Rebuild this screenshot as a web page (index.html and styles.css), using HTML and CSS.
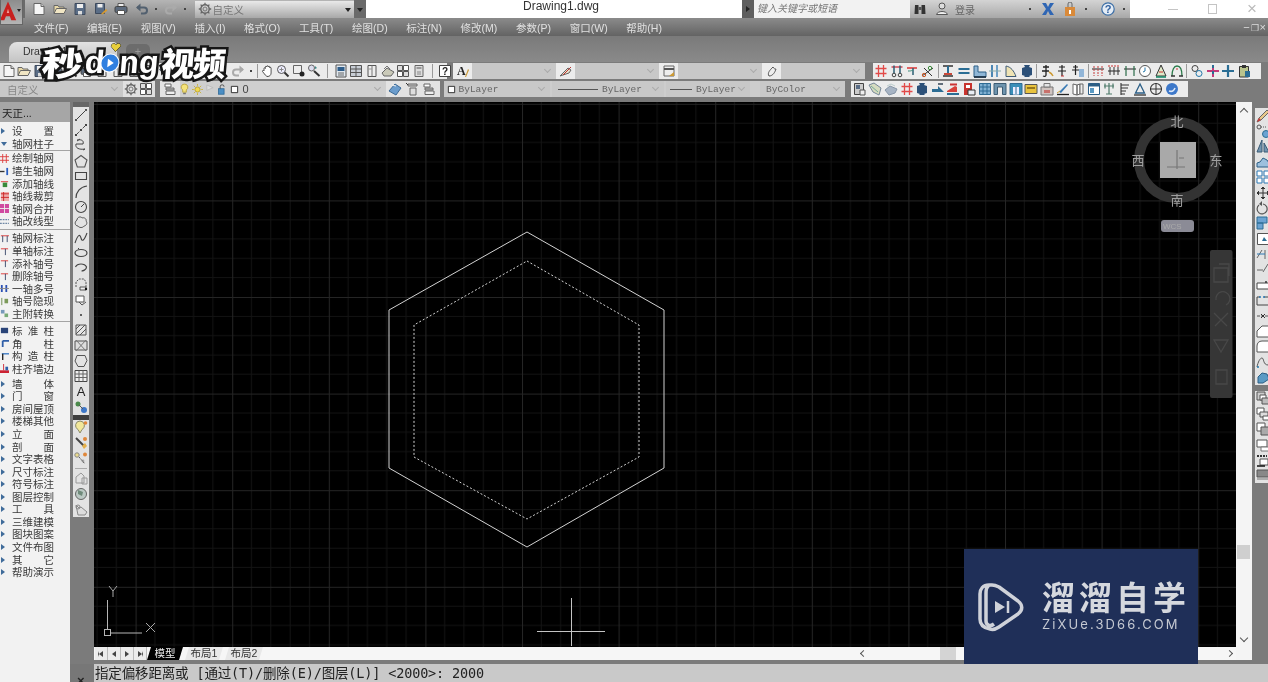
FILE: index.html
```html
<!DOCTYPE html>
<html lang="zh">
<head>
<meta charset="utf-8">
<title>Drawing1.dwg</title>
<link rel="stylesheet" href="styles.css">
</head>
<body>
<svg class="sprite" xmlns="http://www.w3.org/2000/svg">
<defs>
<symbol id="new" viewBox="0 0 14 14"><path d="M2 1.500h7l3 3v8H2z" fill="#f6f6f6" stroke="#666"/><path d="M9 1.500v3h3" fill="#ccc" stroke="#666"/></symbol>
<symbol id="open" viewBox="0 0 14 14"><path d="M1 11.500v-8h4l1 1.500h5v1.500" fill="#e8d9a8" stroke="#666"/><path d="M1 11.500l2.500-5h10l-2.500 5z" fill="#f1e6c4" stroke="#666"/></symbol>
<symbol id="save" viewBox="0 0 14 14"><path d="M2 1.500h10v11H2z" fill="#5a6d86" stroke="#3e4a5c"/><path d="M4 2h6v4H4z" fill="#eee"/><path d="M5 9h4v3.500H5z" fill="#ddd"/></symbol>
<symbol id="saveas" viewBox="0 0 14 14"><path d="M1.500 1.500h9v10h-9z" fill="#5a6d86" stroke="#3e4a5c"/><path d="M3.500 2h5v3.500h-5z" fill="#eee"/><path d="M7 12l5-5 1.500 1.500-5 4z" fill="#d89a2e"/></symbol>
<symbol id="print" viewBox="0 0 14 14"><path d="M4 1.500h6v3H4z" fill="#eee" stroke="#555"/><rect x="1" y="4.500" width="12" height="6" rx="1.500" fill="#5d6b7d" stroke="#444"/><path d="M3.500 8.500h7v4h-7z" fill="#fff" stroke="#555"/></symbol>
<symbol id="undo" viewBox="0 0 14 14"><path d="M2 5.500h7a3 3 0 0 1 0 6H6" fill="none" stroke="#52606f" stroke-width="2"/><path d="M5.500 1.500v8L1 5.500z" fill="#52606f"/></symbol>
<symbol id="redo" viewBox="0 0 14 14"><path d="M12 5.500H5a3 3 0 0 0 0 6h3" fill="none" stroke="#aaa" stroke-width="2"/><path d="M8.500 1.500v8l4.500-4z" fill="#aaa"/></symbol>
<symbol id="gear" viewBox="0 0 14 14"><circle cx="7" cy="7" r="4.200" fill="none" stroke="#666" stroke-width="1.400"/><circle cx="7" cy="7" r="2" fill="none" stroke="#777"/><path d="M7 .8v2M7 11.200v2M.8 7h2M11.200 7h2M2.600 2.600l1.400 1.400M10 10l1.400 1.400M2.600 11.400L4 10M10 4l1.400-1.400" stroke="#666" stroke-width="1.300"/></symbol>
<symbol id="hand" viewBox="0 0 14 14"><path d="M3 7V4.500c0-1 1.300-1 1.300 0V3c0-1 1.500-1 1.500 0v-.500c0-1 1.500-1 1.500 0V3c0-1 1.500-1 1.500 0v1c0-.8 1.300-.8 1.300 0v5c0 2-1.500 3.500-3.500 3.500H7c-1.500 0-2.500-1-3.500-2.500L1.500 7.500c-.5-1 .8-1.500 1.500-.5z" fill="#fff" stroke="#444" stroke-width=".9"/></symbol>
<symbol id="zoom" viewBox="0 0 14 14"><circle cx="5.500" cy="5.500" r="4" fill="#eef" stroke="#555"/><path d="M8.500 8.500l4 4" stroke="#333" stroke-width="2"/><path d="M3.500 5.500h4M5.500 3.500v4" stroke="#888"/></symbol>
<symbol id="zoomw" viewBox="0 0 14 14"><path d="M1.500 1.500h8v8h-8z" fill="#eee" stroke="#666"/><circle cx="10" cy="10" r="2.500" fill="#222"/></symbol>
<symbol id="zoomp" viewBox="0 0 14 14"><circle cx="4.500" cy="4" r="3" fill="#dde" stroke="#666"/><path d="M7 7l5.500 5" stroke="#333" stroke-width="2"/><path d="M8 2l2 2-2 1z" fill="#3a8a8a"/></symbol>
<symbol id="sheet" viewBox="0 0 14 14"><path d="M2 1h10v12H2z" fill="#dfe7ee" stroke="#555"/><path d="M3.500 3h7v4h-7z" fill="#2e5d8a"/><path d="M4 9h6M4 11h6" stroke="#666"/></symbol>
<symbol id="table2" viewBox="0 0 14 14"><path d="M1.500 1.500h11v11h-11z" fill="#c8ced6" stroke="#555"/><path d="M7 1.500v11M1.500 5h11M1.500 8.500h11" stroke="#555"/></symbol>
<symbol id="doc" viewBox="0 0 14 14"><path d="M3 1.500h8v11H3z" fill="#eee" stroke="#555"/><path d="M7 1.500v11" stroke="#777"/><path d="M3 5h4" stroke="#999"/></symbol>
<symbol id="stack" viewBox="0 0 14 14"><path d="M1 9l5-5 7 4-3 4H3z" fill="#c9c9b8" stroke="#666"/><path d="M3 5l3-3 3 3" fill="none" stroke="#777"/></symbol>
<symbol id="grid4" viewBox="0 0 14 14"><path d="M1.500 1.500h5v5h-5zM7.500 7.500h5v5h-5z" fill="#ddd" stroke="#555"/><path d="M7.500 1.500h5v5h-5zM1.500 7.500h5v5h-5z" fill="#fff" stroke="#555"/></symbol>
<symbol id="calc" viewBox="0 0 14 14"><path d="M3 1.500h8v11H3z" fill="#ddd" stroke="#666"/><path d="M4.500 3h5v2h-5z" fill="#999"/><path d="M5 8h4M5 10h4" stroke="#888"/></symbol>
<symbol id="help" viewBox="0 0 14 14"><path d="M1.500 1.500h11v11h-11z" fill="#fff" stroke="#444"/><text x="7" y="11" class="g-help">?</text></symbol>
<symbol id="style-a" viewBox="0 0 14 14"><text x="1" y="11" class="g-a">A</text><path d="M9 13l3-8 1 1-3 7z" fill="#c93"/></symbol>
<symbol id="dim" viewBox="0 0 14 14"><path d="M1 12L9 4l3 2-2 3z" fill="#eadfc8" stroke="#666"/><path d="M4 11l8-8" stroke="#b33"/></symbol>
<symbol id="tstyle" viewBox="0 0 14 14"><path d="M2 2h10v10H2z" fill="#eee" stroke="#666"/><path d="M2 5h10" stroke="#555" stroke-width="2"/><path d="M7 12l5-4v4z" fill="#c93"/></symbol>
<symbol id="mstyle" viewBox="0 0 14 14"><path d="M4 12c-2-3 1-6 4-9 1 2 2 2 3 2-1 3-3 7-7 7z" fill="#eee" stroke="#555"/></symbol>
<symbol id="layer" viewBox="0 0 14 14"><path d="M2 2h6v3H2z" fill="#fff" stroke="#666"/><path d="M3 6h8v2H3z" fill="#bbb" stroke="#666"/><path d="M3 9h9v3.500H3z" fill="#eee" stroke="#666"/></symbol>
<symbol id="bulb" viewBox="0 0 10 14"><path d="M5 1a3.500 3.500 0 0 1 2 6.500V10H3V7.500A3.500 3.500 0 0 1 5 1z" fill="#f4e27a" stroke="#b9a23a"/><path d="M3.500 11.500h3" stroke="#777" stroke-width="1.500"/></symbol>
<symbol id="sun" viewBox="0 0 12 14"><circle cx="6" cy="7" r="2.800" fill="#f1d94e" stroke="#b9a23a"/><path d="M6 1v2M6 11v2M0 7h2M10 7h2M2 3l1.400 1.400M8.600 9.600L10 11M2 11l1.400-1.400M8.600 4.400L10 3" stroke="#c8b13c"/></symbol>
<symbol id="flag" viewBox="0 0 10 14"><path d="M2 2l7 3-7 3z" fill="#ddd" stroke="#bbb"/></symbol>
<symbol id="lock" viewBox="0 0 14 14"><rect x="2" y="6" width="7" height="7" fill="#4b8ec4" stroke="#2c6796"/><path d="M4 6V3.500a2.500 2.500 0 0 1 5 0" fill="none" stroke="#3a3a3a"/></symbol>
<symbol id="lsq" viewBox="0 0 10 14"><path d="M1.500 3.500h7v7h-7z" fill="#fff" stroke="#222"/></symbol>
<symbol id="lyr2" viewBox="0 0 14 14"><path d="M1 9l6-7 6 4-5 7z" fill="#6b9ccc" stroke="#3b6a96"/><path d="M4 3l4 1" stroke="#eee"/></symbol>
<symbol id="lyr3" viewBox="0 0 14 14"><path d="M3 2h9v2H3z" fill="#ccc" stroke="#666"/><path d="M5 6h6v7H5z" fill="#ddd" stroke="#666"/><path d="M1 1l2 2" stroke="#333"/></symbol>
<symbol id="hash" viewBox="0 0 14 14"><path d="M4.500 1v12M9.500 1v12M1.500 4.500h11M1.500 9.500h11" stroke="#e24a48" stroke-width="1.300" fill="none"/></symbol>
<symbol id="posts" viewBox="0 0 14 14"><path d="M1.500 3h11" stroke="#c23" stroke-width="1.200"/><path d="M4 1.500v8M10 1.500v8" stroke="#2c5f74" stroke-width="1.500"/><circle cx="4" cy="11" r="1.800" fill="none" stroke="#444"/><circle cx="10" cy="11" r="1.800" fill="none" stroke="#444"/></symbol>
<symbol id="tee" viewBox="0 0 14 14"><path d="M2 4h10" stroke="#d33" stroke-width="1.500"/><path d="M8 4v7" stroke="#2c5f74" stroke-width="1.500"/><path d="M3 7c2 0 3 0 5-1" stroke="#3a8a7a" fill="none"/></symbol>
<symbol id="scis" viewBox="0 0 14 14"><path d="M1 12l11-8M3 4l8 8" stroke="#333"/><circle cx="3" cy="11" r="1.700" fill="none" stroke="#c52"/><circle cx="9" cy="4" r="1.700" fill="none" stroke="#3a8a3a"/></symbol>
<symbol id="ibar" viewBox="0 0 14 14"><path d="M2 2h10M2 12h10" stroke="#333" stroke-width="1.300"/><path d="M7 2v7" stroke="#2a6d94" stroke-width="2"/><path d="M3 9h8v2H3z" fill="#c8493a"/></symbol>
<symbol id="eq" viewBox="0 0 14 14"><path d="M1.500 5h11M1.500 9h11" stroke="#2a6d94" stroke-width="2"/></symbol>
<symbol id="steps" viewBox="0 0 14 14"><path d="M1 13V2h4v6h8v5z" fill="#8fb6d6" stroke="#2c5f86"/><path d="M1 13h12" stroke="#123" stroke-width="1.500"/></symbol>
<symbol id="bars" viewBox="0 0 14 14"><path d="M4 1v12" stroke="#4b86b4" stroke-width="2"/><path d="M9 1v12" stroke="#6ea0c7" stroke-width="2"/><path d="M1 7h12" stroke="#8aa" /></symbol>
<symbol id="roof" viewBox="0 0 14 14"><path d="M2 12.500V2c5 1 8 5 10 10.500z" fill="#eee3b4" stroke="#3e5a75"/></symbol>
<symbol id="block" viewBox="0 0 14 14"><path d="M4 1h6l-1 2 3 1v7l-3 1 1 1H4l1-1-3-1V4l3-1z" fill="#2c5078"/></symbol>
<symbol id="char1" viewBox="0 0 14 14"><path d="M3 3h6M6 1v10c0 1-1 2-3 1M2 7h7" stroke="#222" stroke-width="1.300" fill="none"/><path d="M9 8c2 1 3 2 4 4" stroke="#c93" stroke-width="1.500" fill="none"/></symbol>
<symbol id="char2" viewBox="0 0 14 14"><path d="M4 3h6M7 1v11M3 7h8" stroke="#222" stroke-width="1.200"/><path d="M6 12h3" stroke="#c33"/></symbol>
<symbol id="char3" viewBox="0 0 14 14"><path d="M2 3h5M4.500 1v10M1 6h7" stroke="#222" stroke-width="1.200"/><path d="M8 5h5v8H8z" fill="#92b6d8"/></symbol>
<symbol id="rods" viewBox="0 0 14 14"><path d="M1 5h12" stroke="#222"/><path d="M3 2v10M7 2v10M11 2v10" stroke="#c63a3a" stroke-dasharray="2 1"/></symbol>
<symbol id="rods2" viewBox="0 0 14 14"><path d="M1 7h12" stroke="#222"/><path d="M3 3v8M7 3v8M11 3v8" stroke="#333"/><path d="M1 2h12" stroke="#c33" stroke-dasharray="2 1"/></symbol>
<symbol id="rods3" viewBox="0 0 14 14"><path d="M1 5h12" stroke="#222"/><path d="M3 2v10M11 2v10" stroke="#2c6d4a" stroke-width="1.200"/></symbol>
<symbol id="clock" viewBox="0 0 14 14"><circle cx="7" cy="7" r="5.500" fill="#fff" stroke="#555"/><path d="M7 3.500V7l-2 1" stroke="#27a" fill="none"/></symbol>
<symbol id="flask" viewBox="0 0 14 14"><path d="M7 1L2 12h10z" fill="#dfe9c9" stroke="#333"/><path d="M5 8h4" stroke="#c33"/><path d="M2 13h10" stroke="#186" stroke-width="1.500"/></symbol>
<symbol id="arch" viewBox="0 0 14 14"><path d="M2 12c0-6 2-10 5-10s5 4 5 10" fill="none" stroke="#2a7a4a" stroke-width="1.300"/><path d="M1 12h4M9 12h4" stroke="#333" stroke-width="1.500"/><path d="M6 5h2" stroke="#c33"/></symbol>
<symbol id="knot" viewBox="0 0 14 14"><circle cx="5" cy="4.500" r="3" fill="none" stroke="#444"/><circle cx="9" cy="9.500" r="3" fill="none" stroke="#27a"/></symbol>
<symbol id="cross" viewBox="0 0 14 14"><path d="M7 1v12M1 7h12" stroke="#c23a7a" stroke-width="2"/><path d="M7 1v12" stroke="#2a6d94" stroke-width="2" stroke-dasharray="3 3"/></symbol>
<symbol id="cross2" viewBox="0 0 14 14"><path d="M7 1v12M1 7h12" stroke="#2a6d94" stroke-width="2.200"/></symbol>
<symbol id="clip" viewBox="0 0 14 14"><path d="M2.500 2.500h9v10.500h-9z" fill="#b9c48d" stroke="#333"/><path d="M5 1h4v3H5z" fill="#333"/><path d="M8 7h5v6H8z" fill="#2a6d94"/></symbol>
<symbol id="thumb" viewBox="0 0 14 14"><path d="M1.500 1.500h9v11h-9z" fill="#ccc" stroke="#444"/><path d="M3 3h4v4H3z" fill="#5a6d86"/><path d="M7 8h5v5H7z" fill="#eee" stroke="#555"/></symbol>
<symbol id="map" viewBox="0 0 14 14"><path d="M1 3l5-2 7 5-2 7-6-3z" fill="#d6dbc0" stroke="#789"/><path d="M3 4l7 6" stroke="#7a9"/></symbol>
<symbol id="blob" viewBox="0 0 14 14"><path d="M1 8l5-4 7 3-2 4-6 2z" fill="#a7b4c4" stroke="#8795a6"/><path d="M3 4l4-2 4 2" fill="none" stroke="#bcc"/></symbol>
<symbol id="wedge" viewBox="0 0 14 14"><path d="M1 7h6V4l6 6H1z" fill="#2c6d94"/><path d="M7 2h5" stroke="#345" stroke-width="1.500"/></symbol>
<symbol id="house" viewBox="0 0 14 14"><path d="M1 9l8-5 2 1v5H1z" fill="#d8403a"/><path d="M1 12h12" stroke="#2a6d94" stroke-width="2"/><path d="M4 1.500h7v2H4z" fill="#c33"/></symbol>
<symbol id="page-r" viewBox="0 0 14 14"><path d="M2 1h8v12H2z" fill="#c8342e"/><path d="M4 3h4v3H4z" fill="#fff"/><path d="M6 8h7v5H6z" fill="#e8eef4" stroke="#333"/></symbol>
<symbol id="cols" viewBox="0 0 14 14"><path d="M1.500 1.500h11v11h-11z" fill="#7fb0d2" stroke="#2e6b94"/><path d="M5 1.500v11M9 1.500v11M1.500 5h11M1.500 9h11" stroke="#2e6b94"/></symbol>
<symbol id="door" viewBox="0 0 14 14"><path d="M1 1.500h12v11h-3.500V5h-5v7.500H1z" fill="#6e94ae" stroke="#3c5c74"/></symbol>
<symbol id="door2" viewBox="0 0 14 14"><path d="M1 1.500h12v11H1z" fill="#3a8fb8" stroke="#2e6b94"/><path d="M4 5h6v7.500H4z" fill="#eef"/><path d="M7 5v7" stroke="#2e6b94"/></symbol>
<symbol id="env" viewBox="0 0 14 14"><path d="M1 2.500h12v9H1z" fill="#e9c33e" stroke="#555"/><path d="M3 6h8" stroke="#7a5d10" stroke-width="1.500"/></symbol>
<symbol id="cam" viewBox="0 0 14 14"><path d="M1 5h12v8H1z" fill="#d0c4c0" stroke="#777"/><path d="M4 1.500h6V5H4z" fill="#e5e5e5" stroke="#777"/><path d="M4 8h6v3H4z" fill="#c8716c"/></symbol>
<symbol id="mark" viewBox="0 0 14 14"><path d="M3 10l8-8 1 1-7 8z" fill="#3b7bb4"/><path d="M1 12.500h12" stroke="#222" stroke-width="1.300"/><path d="M1 11l3-2" stroke="#d0a02e"/></symbol>
<symbol id="book" viewBox="0 0 14 14"><path d="M2 2l4 1v10l-4-1zM6 3l3-1v10l-3 1z" fill="#fff" stroke="#666"/><path d="M9 2h3v10H9z" fill="#eee" stroke="#666"/></symbol>
<symbol id="panel" viewBox="0 0 14 14"><path d="M1.500 1.500h11v11h-11z" fill="#fff" stroke="#2c5f86"/><path d="M1.500 1.500h11v3h-11z" fill="#2c5f86"/><path d="M3 6h4v5H3z" fill="#5a9ac4"/></symbol>
<symbol id="tree" viewBox="0 0 14 14"><path d="M7 1v11M2 4h10M3 1.500v5M11 1.500v5M4 12h6" stroke="#4e7a6a" stroke-width="1.200" fill="none"/></symbol>
<symbol id="fence" viewBox="0 0 14 14"><path d="M3 1v12M3 3h8M3 6h7M3 9h5M3 12h4" stroke="#333" stroke-width="1.100"/></symbol>
<symbol id="tri" viewBox="0 0 14 14"><path d="M7 2L2.500 11h9z" fill="none" stroke="#2c5f86" stroke-width="1.300"/><path d="M1 13h12" stroke="#333" stroke-width="1.300"/></symbol>
<symbol id="crosshair" viewBox="0 0 14 14"><circle cx="7" cy="7" r="5.500" fill="none" stroke="#333" stroke-width="1.100"/><path d="M7 1v12M1 7h12" stroke="#333"/></symbol>
<symbol id="orb" viewBox="0 0 14 14"><circle cx="7" cy="7" r="6" fill="#3d78c9"/><path d="M4 9c3 1 5 0 6-3" stroke="#dde8f8" stroke-width="1.500" fill="none"/></symbol>
<symbol id="line" viewBox="0 0 14 14"><path d="M2 12L12 2" stroke="#444"/><path d="M1 11h2v2H1zM11 1h2v2h-2z" fill="#555"/></symbol>
<symbol id="pline" viewBox="0 0 14 14"><path d="M2 12l5-5 5-5" stroke="#444" stroke-dasharray="4 1"/><path d="M1 11h2v2H1zM6 6h2v2H6zM11 1h2v2h-2z" fill="#444"/></symbol>
<symbol id="ply" viewBox="0 0 14 14"><path d="M3 2c5-1 7 1 6 4H2c-1 4 3 6 9 5" fill="none" stroke="#444"/><path d="M3 3l3-2M11 11l-2 1" stroke="#444"/></symbol>
<symbol id="pent" viewBox="0 0 14 14"><path d="M7 1.500l6 4.500-2.300 7H3.300L1 6z" fill="none" stroke="#555" stroke-width="1.100"/></symbol>
<symbol id="rect" viewBox="0 0 14 14"><path d="M1.500 3.500h11v7h-11z" fill="none" stroke="#444" stroke-width="1.100"/></symbol>
<symbol id="arc" viewBox="0 0 14 14"><path d="M2 13C2 7 6 2 13 1" fill="none" stroke="#444" stroke-width="1.200"/></symbol>
<symbol id="circ" viewBox="0 0 14 14"><circle cx="7" cy="7" r="5.500" fill="none" stroke="#444" stroke-width="1.100"/><path d="M7 7l3-3" stroke="#444"/></symbol>
<symbol id="cloud" viewBox="0 0 14 14"><path d="M3 5c0-3 4-4 5-2 2-1 5 1 4 3 2 2 0 5-2 5-1 2-5 2-6 0-3 0-4-4-1-6z" fill="none" stroke="#555"/></symbol>
<symbol id="spl" viewBox="0 0 14 14"><path d="M1 12c3-9 5-9 6-5s3 3 6-5" fill="none" stroke="#444" stroke-width="1.100"/></symbol>
<symbol id="ell" viewBox="0 0 14 14"><ellipse cx="7" cy="7" rx="6" ry="3.500" fill="none" stroke="#444" stroke-width="1.200"/><path d="M4 3l1-1" stroke="#444"/></symbol>
<symbol id="earc" viewBox="0 0 14 14"><path d="M1.500 6c2-4 9-4 11 0 0 3-4 4-5 4" fill="none" stroke="#444" stroke-width="1.200"/></symbol>
<symbol id="ins" viewBox="0 0 14 14"><path d="M2 10V5l3-3h5l2 3v5" fill="none" stroke="#555" stroke-dasharray="2 1"/><path d="M6 10h6v3H6z" fill="#eee" stroke="#555"/><circle cx="12" cy="12" r="1.200" fill="#111"/></symbol>
<symbol id="ins2" viewBox="0 0 14 14"><path d="M2 4h8v6H2z" fill="#fff" stroke="#555"/><path d="M5 10l3 3 4-3" fill="none" stroke="#555"/></symbol>
<symbol id="pt" viewBox="0 0 14 14"><circle cx="7" cy="7" r="1" fill="#333"/></symbol>
<symbol id="hatch" viewBox="0 0 14 14"><path d="M2 2h10v10H2z" fill="#e5e5e5" stroke="#555"/><path d="M2 6l4-4M2 11l9-9M6 12l6-6" stroke="#555"/></symbol>
<symbol id="grad" viewBox="0 0 14 14"><path d="M1 3h12v9H1z" fill="#ddd" stroke="#555"/><path d="M2 2l10 11M12 2L2 13" stroke="#777"/></symbol>
<symbol id="regi" viewBox="0 0 14 14"><path d="M3 1.500h8l2 5-3 6H4L1 7z" fill="none" stroke="#555"/></symbol>
<symbol id="tbl" viewBox="0 0 14 14"><path d="M1 1.500h12v11H1z" fill="#eee" stroke="#444"/><path d="M1 5h12M1 8.500h12M5 1.500v11M9 1.500v11" stroke="#666"/></symbol>
<symbol id="mtx" viewBox="0 0 14 14"><text x="7" y="12" class="g-mtx">A</text></symbol>
<symbol id="attr" viewBox="0 0 14 14"><circle cx="4" cy="4" r="2.500" fill="#4b8a4b"/><circle cx="10" cy="10" r="3" fill="#3d78c9"/><path d="M5 5l4 4" stroke="#555"/></symbol>
<symbol id="tbulb" viewBox="0 0 14 14"><path d="M6 1a4.500 4.500 0 0 1 2 8.500L6 13 4 9.500A4.500 4.500 0 0 1 6 1z" fill="#f2e89b" stroke="#8a8a6a"/><circle cx="11.500" cy="3" r="1.800" fill="#e0873a"/></symbol>
<symbol id="tbrush" viewBox="0 0 14 14"><path d="M2 2l8 8" stroke="#444" stroke-width="2"/><path d="M8 10l3-3 2 3-3 3z" fill="#e5b04a"/><circle cx="11" cy="3" r="2" fill="#e0873a"/></symbol>
<symbol id="tdots" viewBox="0 0 14 14"><circle cx="3" cy="4" r="2.200" fill="#eadb8e" stroke="#888"/><circle cx="11" cy="3.500" r="2" fill="#e0873a"/><circle cx="9" cy="10" r="1.400" fill="#aaa"/><path d="M5 6l6 7" stroke="#555" stroke-dasharray="2 1"/></symbol>
<symbol id="ghost" viewBox="0 0 14 14"><path d="M2 12V6l5-4 3 3v7zM8 7h5v6H8z" fill="none" stroke="#999"/></symbol>
<symbol id="globe" viewBox="0 0 14 14"><circle cx="7" cy="7" r="5.500" fill="#bcc9c4" stroke="#666"/><path d="M4 3l5 2-1 4-4-2z" fill="#6f8a7a"/></symbol>
<symbol id="tool" viewBox="0 0 14 14"><path d="M2 3l3 3 2-1 6 5-2 3H4z" fill="#ddd" stroke="#888"/><circle cx="4" cy="5" r="2" fill="none" stroke="#888"/></symbol>
<symbol id="pencil" viewBox="0 0 14 14"><path d="M1 13l2-4 8-8 2 2-8 8z" fill="#e8c88a" stroke="#666"/><path d="M1 13l2-4 2 2z" fill="#c33"/></symbol>
<symbol id="conn" viewBox="0 0 14 14"><circle cx="3" cy="3" r="2" fill="none" stroke="#555"/><circle cx="10" cy="10" r="3.500" fill="#6ba3d2" stroke="#2c6d94"/><path d="M5 3h6" stroke="#555" stroke-dasharray="1 1"/></symbol>
<symbol id="mir" viewBox="0 0 14 14"><path d="M6 1L1 13h5zM8 4v9h5z" fill="#7295b0" stroke="#3a5a74"/></symbol>
<symbol id="cld2" viewBox="0 0 14 14"><path d="M1 12V8l3-1 3-4 4 2 2 3v4z" fill="#9cc0de" stroke="#2c5f86"/></symbol>
<symbol id="arr4" viewBox="0 0 14 14"><path d="M1 1h5v5H1zM8 1h5v5H8zM1 8h5v5H1zM8 8h5v5H8z" fill="#fff" stroke="#2c78b4"/></symbol>
<symbol id="move" viewBox="0 0 14 14"><path d="M7 1v12M1 7h12" stroke="#333"/><path d="M5 3l2-2 2 2M5 11l2 2 2-2M3 5L1 7l2 2M11 5l2 2-2 2" fill="#333" stroke="#333"/></symbol>
<symbol id="rot" viewBox="0 0 14 14"><path d="M3 4a5 5 0 1 0 4-1" fill="none" stroke="#555" stroke-width="1.200"/><path d="M6 0v5L3 3z" fill="#555"/></symbol>
<symbol id="scale" viewBox="0 0 14 14"><path d="M1 1h10v6H1zM1 7h6v6H1z" fill="#6ba3d2" stroke="#2c6d94"/></symbol>
<symbol id="str" viewBox="0 0 14 14"><path d="M1.500 1.500h11v11h-11z" fill="#fff" stroke="#555"/><path d="M8 5l3 4H6z" fill="#2c6d94"/></symbol>
<symbol id="trim" viewBox="0 0 14 14"><path d="M1 11l5-8M9 3v9" stroke="#666"/><path d="M1 7h8" stroke="#2c78b4"/></symbol>
<symbol id="ext" viewBox="0 0 14 14"><path d="M1 8h6" stroke="#666"/><path d="M7 10l5-8" stroke="#666"/></symbol>
<symbol id="brk" viewBox="0 0 14 14"><path d="M1 5h12v6H1z" fill="#fff" stroke="#444"/><circle cx="10" cy="4" r="1" fill="#333"/></symbol>
<symbol id="brk2" viewBox="0 0 14 14"><path d="M1 12V4h3M8 4h5v8H1" fill="none" stroke="#444"/><circle cx="4" cy="4" r="1" fill="#2c78b4"/><circle cx="8" cy="4" r="1" fill="#2c78b4"/></symbol>
<symbol id="join" viewBox="0 0 14 14"><path d="M1 7h12" stroke="#555" stroke-dasharray="3 1"/><path d="M5 5l2 2-2 2M9 5L7 7l2 2" fill="none" stroke="#333"/></symbol>
<symbol id="chm" viewBox="0 0 14 14"><path d="M1 13V7l5-5h7v11z" fill="#fff" stroke="#555"/></symbol>
<symbol id="flt" viewBox="0 0 14 14"><path d="M1 13V7c0-3 2-5 5-5h7v11z" fill="#fff" stroke="#555"/></symbol>
<symbol id="bld" viewBox="0 0 14 14"><path d="M1 12c1-5 3-9 5-9s1 7 6 7" fill="none" stroke="#555"/><circle cx="2" cy="12" r="1" fill="#27a"/></symbol>
<symbol id="expl" viewBox="0 0 14 14"><path d="M2 7l4-4 5 1 2 5-6 4H2z" fill="#5a9ac4" stroke="#2c5f86"/></symbol>
<symbol id="ord" viewBox="0 0 14 14"><path d="M1 1h8v8H1z" fill="#ccc" stroke="#555"/><path d="M4 4h6v5H4z" fill="#fff" stroke="#555"/><path d="M6 7h7v6H6z" fill="#bbb" stroke="#555"/></symbol>
<symbol id="ord2" viewBox="0 0 14 14"><path d="M1 1h7v6H1z" fill="#fff" stroke="#555"/><path d="M4 5h8v5H4z" fill="#ddd" stroke="#555"/><path d="M7 9h6v4H7z" fill="#fff" stroke="#555"/></symbol>
<symbol id="ord3" viewBox="0 0 14 14"><path d="M1 1h8v8H1z" fill="#fff" stroke="#555"/><path d="M5 5h8v8H5z" fill="#aaa" stroke="#555"/></symbol>
<symbol id="ord4" viewBox="0 0 14 14"><path d="M1 2h10v7H1z" fill="#fff" stroke="#555"/><path d="M5 9h8v4H5z" fill="#fff" stroke="#777"/></symbol>
<symbol id="abc" viewBox="0 0 14 14"><path d="M1 3h10" stroke="#333" stroke-width="2" stroke-dasharray="2 1"/><path d="M4 6h8v6H4z" fill="#fff" stroke="#555"/><path d="M1 13h8" stroke="#111" stroke-width="1.500"/></symbol>
<symbol id="sheet2" viewBox="0 0 14 14"><path d="M1 2h12v7H1z" fill="#888" stroke="#555"/><path d="M1 11h12" stroke="#777"/></symbol>
<symbol id="binoc" viewBox="0 0 14 14"><path d="M2 3h3.500v9H1.500zM8.500 3H12l.500 9H8.500z" fill="#333"/><path d="M5.500 5h3v3h-3z" fill="#555"/></symbol>
<symbol id="user" viewBox="0 0 14 14"><circle cx="7" cy="4" r="3" fill="#ddd" stroke="#555"/><path d="M1.500 12.500c1-4 10-4 11 0z" fill="#eee" stroke="#555"/></symbol>
<symbol id="xchg" viewBox="0 0 14 14"><path d="M1 1h4l2 4 2-4h4L9 7l4 6H9L7 9l-2 4H1l4-6z" fill="#2f66b4"/></symbol>
<symbol id="cart" viewBox="0 0 14 14"><path d="M2 5h10v9H2z" fill="#d98a3a"/><path d="M5 5V2a2 2 0 0 1 4 0v3" fill="none" stroke="#666"/><path d="M6 8h2v4H6z" fill="#fff"/></symbol>
<symbol id="qmark" viewBox="0 0 14 14"><circle cx="7" cy="7" r="6.200" fill="#e4ecf5" stroke="#3b6ea6" stroke-width="1.200"/><text x="7" y="11" class="g-q">?</text></symbol>
<symbol id="logo-a" viewBox="0 0 22 24"><path d="M1 24L11 1l10 23h-6l-1.800-5H8.500L6.500 24z" fill="#c8201e"/><path d="M9.500 15h3l-1.500-5z" fill="#f2a09a"/></symbol>
<symbol id="mk-grid" viewBox="0 0 10 10"><path d="M3 0v10M7 0v10M0 3h10M0 7h10" stroke="#dd3b3b"/></symbol>
<symbol id="mk-wall" viewBox="0 0 10 10"><path d="M0 5h5" stroke="#333" stroke-width="1.500"/><path d="M8 1v8" stroke="#2a5fc2" stroke-width="2"/></symbol>
<symbol id="mk-add" viewBox="0 0 10 10"><path d="M1 3h8" stroke="#d33"/><path d="M3 4h5v5H3z" fill="#3a8a3a"/></symbol>
<symbol id="mk-cut" viewBox="0 0 10 10"><path d="M1 0h9v10H1z" fill="#eaa"/><path d="M1 2h9M1 6h9M4 0v10" stroke="#c22"/></symbol>
<symbol id="mk-mrg" viewBox="0 0 10 10"><path d="M0 0h10v10H0z" fill="#d04aa0"/><path d="M5 0v10M0 5h10" stroke="#eee"/></symbol>
<symbol id="mk-ln" viewBox="0 0 10 10"><path d="M0 3h10M0 7h10" stroke="#3a5c84" stroke-dasharray="2 1"/></symbol>
<symbol id="mk-tt" viewBox="0 0 10 10"><path d="M1 2h9" stroke="#d33"/><path d="M3 2v7M8 2v7" stroke="#346"/></symbol>
<symbol id="mk-t" viewBox="0 0 10 10"><path d="M1 2h8" stroke="#d33"/><path d="M6 2v7" stroke="#346"/></symbol>
<symbol id="mk-mul" viewBox="0 0 10 10"><path d="M2 1v8M7 1v8" stroke="#2a4fb4" stroke-width="2"/><path d="M0 5h10" stroke="#888"/></symbol>
<symbol id="mk-hid" viewBox="0 0 10 10"><path d="M2 1v8" stroke="#6a8a4a"/><path d="M5 2h4v5H5z" fill="#7c9a5a"/></symbol>
<symbol id="mk-sw" viewBox="0 0 10 10"><path d="M1 1h4v4H1z" fill="#79b"/><path d="M5 5h4v4H5z" fill="#7a7"/></symbol>
<symbol id="mk-col" viewBox="0 0 10 10"><path d="M1 2h8v6H1z" fill="#2a4478"/></symbol>
<symbol id="mk-ang" viewBox="0 0 10 10"><path d="M3 2h7M3 2v7" stroke="#2f5ea8" stroke-width="2"/></symbol>
<symbol id="mk-gz" viewBox="0 0 10 10"><path d="M2 2h8" stroke="#3a78c4" stroke-width="1.500"/><path d="M3 2v7" stroke="#222" stroke-width="1.500"/></symbol>
<symbol id="mk-qq" viewBox="0 0 10 10"><path d="M4 0v7" stroke="#c23"/><path d="M0 7h10v3H0z" fill="#c23"/><path d="M6 3h3v4H6z" fill="#2f5ea8"/></symbol>
</defs>
</svg>

<div class="app">
  <header class="titlebar">
    <div class="logo-btn"><svg class="logo-a"><use href="#logo-a"/></svg><span class="logo-caret"></span></div>
    <div class="qat">
      <svg class="i"><use href="#new"/></svg><svg class="i"><use href="#open"/></svg><svg class="i"><use href="#save"/></svg><svg class="i"><use href="#saveas"/></svg><svg class="i"><use href="#print"/></svg><svg class="i"><use href="#undo"/></svg><span class="dot"></span><svg class="i"><use href="#redo"/></svg><span class="dot"></span>
      <div class="ws"><svg class="i"><use href="#gear"/></svg><span>自定义</span><span class="caret-d"></span></div>
    </div>
    <div class="qat-more"><span class="caret-d"></span></div>
    <div class="doc-title">Drawing1.dwg</div>
    <div class="srch-btn"><span class="caret-r"></span></div>
    <div class="search">键入关键字或短语</div>
    <div class="info">
      <svg class="i binoc"><use href="#binoc"/></svg><svg class="i"><use href="#user"/></svg><span class="login">登录</span><span class="dot push"></span><svg class="i xc"><use href="#xchg"/></svg><svg class="i"><use href="#cart"/></svg><span class="dot"></span><svg class="i q"><use href="#qmark"/></svg><span class="dot"></span>
    </div>
    <div class="win">
      <span class="win-min"></span><span class="win-max"></span><span class="win-x">×</span>
    </div>
  </header>

  <nav class="menubar">
    <span>文件(F)</span><span>编辑(E)</span><span>视图(V)</span><span>插入(I)</span><span>格式(O)</span><span>工具(T)</span><span>绘图(D)</span><span>标注(N)</span><span>修改(M)</span><span>参数(P)</span><span>窗口(W)</span><span>帮助(H)</span>
    <div class="menu-win">−<b>❐</b>×</div>
  </nav>

  <div class="tabbar">
    <div class="doc-tab">Drawing1</div>
    <div class="plus-tab">+</div>
  </div>

  <div class="tb-row r1">
    <div class="sec s-std">
      <svg class="i"><use href="#new"/></svg><svg class="i"><use href="#open"/></svg><svg class="i"><use href="#save"/></svg><svg class="i"><use href="#print"/></svg><svg class="i"><use href="#zoom"/></svg><svg class="i"><use href="#print"/></svg><svg class="i"><use href="#doc"/></svg><svg class="i"><use href="#doc"/></svg><svg class="i"><use href="#doc"/></svg><svg class="i"><use href="#doc"/></svg><svg class="i"><use href="#undo"/></svg><svg class="i"><use href="#redo"/></svg>
      <span class="spacer-a"></span>
      <svg class="i"><use href="#redo"/></svg><span class="dot"></span><i class="sep"></i>
      <svg class="i"><use href="#hand"/></svg><svg class="i"><use href="#zoom"/></svg><svg class="i"><use href="#zoomw"/></svg><svg class="i"><use href="#zoomp"/></svg><i class="sep wide"></i>
      <svg class="i"><use href="#sheet"/></svg><svg class="i"><use href="#table2"/></svg><svg class="i"><use href="#doc"/></svg><svg class="i"><use href="#stack"/></svg><svg class="i"><use href="#grid4"/></svg><svg class="i"><use href="#calc"/></svg><i class="sep wide"></i><svg class="i"><use href="#help"/></svg>
    </div>
    <div class="sec s-style">
      <span class="btn-i"><svg class="i"><use href="#style-a"/></svg></span><span class="cb w83"><span class="chev"></span></span>
      <span class="btn-i"><svg class="i"><use href="#dim"/></svg></span><span class="cb w83"><span class="chev"></span></span>
      <span class="btn-i"><svg class="i"><use href="#tstyle"/></svg></span><span class="cb w83"><span class="chev"></span></span>
      <span class="btn-i"><svg class="i"><use href="#mstyle"/></svg></span><span class="cb w83"><span class="chev"></span></span>
    </div>
    <div class="sec s-tz1">
      <svg class="i"><use href="#hash"/></svg><svg class="i"><use href="#posts"/></svg><svg class="i"><use href="#tee"/></svg><svg class="i"><use href="#scis"/></svg><i class="sep"></i>
      <svg class="i"><use href="#ibar"/></svg><svg class="i"><use href="#eq"/></svg><svg class="i"><use href="#steps"/></svg><svg class="i"><use href="#bars"/></svg><svg class="i"><use href="#roof"/></svg><svg class="i"><use href="#block"/></svg><i class="sep"></i>
      <svg class="i"><use href="#char1"/></svg><svg class="i"><use href="#char2"/></svg><svg class="i"><use href="#char3"/></svg><i class="sep"></i>
      <svg class="i"><use href="#rods"/></svg><svg class="i"><use href="#rods2"/></svg><svg class="i"><use href="#rods3"/></svg><svg class="i"><use href="#clock"/></svg><svg class="i"><use href="#flask"/></svg><svg class="i"><use href="#arch"/></svg><i class="sep"></i>
      <svg class="i"><use href="#knot"/></svg><svg class="i"><use href="#cross"/></svg><svg class="i"><use href="#cross2"/></svg><svg class="i"><use href="#clip"/></svg>
    </div>
  </div>

  <div class="tb-row r2">
    <div class="sec s-ws">
      <span class="cb w122 muted">自定义<span class="chev"></span></span>
      <span class="pair"><svg class="i"><use href="#gear"/></svg><svg class="i"><use href="#grid4"/></svg></span>
    </div>
    <div class="sec s-layer">
      <span class="btn-l"><svg class="i"><use href="#layer"/></svg></span>
      <span class="cb w208"><svg class="i-b"><use href="#bulb"/></svg><svg class="i-s"><use href="#sun"/></svg><svg class="i-b"><use href="#flag"/></svg><svg class="i-s"><use href="#lock"/></svg><svg class="i-b"><use href="#lsq"/></svg><b class="lname">0</b><span class="chev"></span></span>
      <svg class="i"><use href="#lyr2"/></svg><svg class="i"><use href="#lyr3"/></svg><svg class="i"><use href="#layer"/></svg>
    </div>
    <div class="sec s-prop">
      <span class="cb w106 mono"><svg class="i-b"><use href="#lsq"/></svg>ByLayer<span class="chev"></span></span>
      <span class="cb w112 mono"><i class="ln"></i>ByLayer<span class="chev"></span></span>
      <span class="cb w84 mono"><i class="ln sh"></i>ByLayer<span class="chev"></span></span>
      <span class="cb w85 mono">ByColor<span class="chev"></span></span>
    </div>
    <div class="sec s-tz2">
      <svg class="i"><use href="#thumb"/></svg><svg class="i"><use href="#map"/></svg><svg class="i"><use href="#blob"/></svg><svg class="i"><use href="#hash"/></svg><svg class="i"><use href="#block"/></svg><svg class="i"><use href="#wedge"/></svg><svg class="i"><use href="#house"/></svg><svg class="i"><use href="#page-r"/></svg><svg class="i"><use href="#cols"/></svg><svg class="i"><use href="#door"/></svg><svg class="i"><use href="#door2"/></svg><svg class="i"><use href="#env"/></svg><svg class="i"><use href="#cam"/></svg><svg class="i"><use href="#mark"/></svg><svg class="i"><use href="#book"/></svg><svg class="i"><use href="#panel"/></svg><svg class="i"><use href="#tree"/></svg><svg class="i"><use href="#fence"/></svg><svg class="i"><use href="#tri"/></svg><svg class="i"><use href="#crosshair"/></svg><svg class="i"><use href="#orb"/></svg>
    </div>
  </div>

  <div class="body">
    <aside class="tz">
      <div class="tz-head">天正...</div>
      <div class="tz-sec line nb">
        <div class="it"><u class="arr"></u><span>设 置</span></div>
        <div class="it"><u class="arr dn"></u><span>轴网柱子</span></div>
      </div>
      <div class="tz-sec line tight">
        <div class="it"><svg class="m"><use href="#mk-grid"/></svg><span>绘制轴网</span></div>
        <div class="it"><svg class="m"><use href="#mk-wall"/></svg><span>墙生轴网</span></div>
        <div class="it"><svg class="m"><use href="#mk-add"/></svg><span>添加轴线</span></div>
        <div class="it"><svg class="m"><use href="#mk-cut"/></svg><span>轴线裁剪</span></div>
        <div class="it"><svg class="m"><use href="#mk-mrg"/></svg><span>轴网合并</span></div>
        <div class="it"><svg class="m"><use href="#mk-ln"/></svg><span>轴改线型</span></div>
      </div>
      <div class="tz-sec line">
        <div class="it"><svg class="m"><use href="#mk-tt"/></svg><span>轴网标注</span></div>
        <div class="it"><svg class="m"><use href="#mk-t"/></svg><span>单轴标注</span></div>
        <div class="it"><svg class="m"><use href="#mk-t"/></svg><span>添补轴号</span></div>
        <div class="it"><svg class="m"><use href="#mk-t"/></svg><span>删除轴号</span></div>
        <div class="it"><svg class="m"><use href="#mk-mul"/></svg><span>一轴多号</span></div>
        <div class="it"><svg class="m"><use href="#mk-hid"/></svg><span>轴号隐现</span></div>
        <div class="it"><svg class="m"><use href="#mk-sw"/></svg><span>主附转换</span></div>
      </div>
      <div class="tz-sec">
        <div class="it"><svg class="m"><use href="#mk-col"/></svg><span>标 准 柱</span></div>
        <div class="it"><svg class="m"><use href="#mk-ang"/></svg><span>角 柱</span></div>
        <div class="it"><svg class="m"><use href="#mk-gz"/></svg><span>构 造 柱</span></div>
        <div class="it"><svg class="m"><use href="#mk-qq"/></svg><span>柱齐墙边</span></div>
      </div>
      <div class="tz-sec">
        <div class="it"><u class="arr"></u><span>墙 体</span></div>
        <div class="it"><u class="arr"></u><span>门 窗</span></div>
        <div class="it"><u class="arr"></u><span>房间屋顶</span></div>
        <div class="it"><u class="arr"></u><span>楼梯其他</span></div>
        <div class="it"><u class="arr"></u><span>立 面</span></div>
        <div class="it"><u class="arr"></u><span>剖 面</span></div>
        <div class="it"><u class="arr"></u><span>文字表格</span></div>
        <div class="it"><u class="arr"></u><span>尺寸标注</span></div>
        <div class="it"><u class="arr"></u><span>符号标注</span></div>
        <div class="it"><u class="arr"></u><span>图层控制</span></div>
        <div class="it"><u class="arr"></u><span>工 具</span></div>
        <div class="it"><u class="arr"></u><span>三维建模</span></div>
        <div class="it"><u class="arr"></u><span>图块图案</span></div>
        <div class="it"><u class="arr"></u><span>文件布图</span></div>
        <div class="it"><u class="arr"></u><span>其 它</span></div>
        <div class="it"><u class="arr"></u><span>帮助演示</span></div>
      </div>
    </aside>

    <div class="work">
      <div class="mid">
        <div class="draw-col">
          <div class="grip"></div>
          <div class="vtools">
            <svg class="i"><use href="#line"/></svg><svg class="i"><use href="#pline"/></svg><svg class="i"><use href="#ply"/></svg><svg class="i"><use href="#pent"/></svg><svg class="i"><use href="#rect"/></svg><svg class="i"><use href="#arc"/></svg><svg class="i"><use href="#circ"/></svg><svg class="i"><use href="#cloud"/></svg><svg class="i"><use href="#spl"/></svg><svg class="i"><use href="#ell"/></svg><svg class="i"><use href="#earc"/></svg><svg class="i"><use href="#ins"/></svg><svg class="i"><use href="#ins2"/></svg><svg class="i"><use href="#pt"/></svg><svg class="i"><use href="#hatch"/></svg><svg class="i"><use href="#grad"/></svg><svg class="i"><use href="#regi"/></svg><svg class="i"><use href="#tbl"/></svg><svg class="i"><use href="#mtx"/></svg><svg class="i"><use href="#attr"/></svg>
          </div>
          <div class="grip dark"></div>
          <div class="vtools">
            <svg class="i"><use href="#tbulb"/></svg><svg class="i"><use href="#tbrush"/></svg><svg class="i"><use href="#tdots"/></svg><i class="hsep"></i><svg class="i"><use href="#ghost"/></svg><svg class="i"><use href="#globe"/></svg><svg class="i"><use href="#tool"/></svg>
          </div>
        </div>

        <div class="view-grid">
          <svg class="canvas" viewBox="94 102 1142 545" xmlns="http://www.w3.org/2000/svg">
            <defs>
              <pattern id="g" x="522" y="297" width="96.6" height="96.6" patternUnits="userSpaceOnUse">
                <path d="M19.300 0v96.600M38.600 0v96.600M58 0v96.600M77.300 0v96.600M0 19.300h96.600M0 38.600h96.600M0 58h96.600M0 77.300h96.600" stroke="#131313" stroke-width="1"/>
                <path d="M.5 0v96.600M0 .5h96.600" stroke="#252525" stroke-width="1"/>
              </pattern>
            </defs>
            <rect x="94" y="102" width="1142" height="545" fill="#000"/>
            <rect x="94" y="102" width="1142" height="545" fill="url(#g)"/>
            <path d="M527 232L664 310V468L527 547L389 468V310Z" fill="none" stroke="#d2d2d2" stroke-width="1"/>
            <path d="M527 261L639 325V457L527 519L414 457V325Z" fill="none" stroke="#d2d2d2" stroke-width="1" stroke-dasharray="2 2"/>
            <path d="M107.500 600V629M111 633H142" stroke="#b5b5b5"/>
            <rect x="104.500" y="629.500" width="6" height="6" fill="none" stroke="#b5b5b5"/>
            <path d="M109 586l4 5 4-5M113 591v6M146 623l9 9M155 623l-9 9" fill="none" stroke="#a8a8a8"/>
            <path d="M537 631.500H605M571.500 598V646" stroke="#c4c4c4"/>
            <circle cx="1177" cy="160" r="38" fill="none" stroke="#333" stroke-width="10"/>
            <rect x="1160" y="142" width="36" height="36" fill="#a9a9a9"/>
            <path d="M1177 150v19M1167 167h18M1179 158h5" stroke="#777" stroke-width="1.200"/>
            <text x="1177" y="126" class="cp">北</text>
            <text x="1177" y="205" class="cp">南</text>
            <text x="1138" y="165" class="cp">西</text>
            <text x="1216" y="165" class="cp">东</text>
            <rect x="1161" y="220" width="33" height="12" rx="3" fill="#8b8b96"/>
            <text x="1163" y="229" class="wcs">WCS</text>
            <rect x="1210" y="250" width="22.500" height="148" rx="2" fill="#363636"/>
            <path d="M1214 268h14v14h-14zM1219 264h10v12M1216 300a7 7 0 1 1 10 5M1214 313l13 13M1228 313l-13 13M1214 340h14l-7 12zM1216 370h11v14h-11z" fill="none" stroke="#484848" stroke-width="1.300"/>
          </svg>
          <div class="vscroll">
            <span class="chev-up"></span>
            <span class="thumb-v"></span>
            <span class="chev-dn"></span>
          </div>
          <div class="tabs">
            <span class="nav"><u class="tl bar"></u></span><span class="nav"><u class="tl"></u></span><span class="nav"><u class="tr"></u></span><span class="nav"><u class="tr bar"></u></span>
            <span class="tab on">模型</span><span class="tab">布局1</span><span class="tab">布局2</span>
            <span class="tabs-fill"></span>
            <span class="chev-l"></span><span class="thumb-h"></span><span class="chev-r"></span>
          </div>
          <span class="corner"></span>
        </div>

        <div class="mod-col">
          <div class="vtools clip">
            <svg class="i"><use href="#pencil"/></svg><svg class="i"><use href="#conn"/></svg><svg class="i"><use href="#mir"/></svg><svg class="i"><use href="#cld2"/></svg><svg class="i"><use href="#arr4"/></svg><svg class="i"><use href="#move"/></svg><svg class="i"><use href="#rot"/></svg><svg class="i"><use href="#scale"/></svg><svg class="i"><use href="#str"/></svg><svg class="i"><use href="#trim"/></svg><svg class="i"><use href="#ext"/></svg><svg class="i"><use href="#brk"/></svg><svg class="i"><use href="#brk2"/></svg><svg class="i"><use href="#join"/></svg><svg class="i"><use href="#chm"/></svg><svg class="i"><use href="#flt"/></svg><svg class="i"><use href="#bld"/></svg><svg class="i"><use href="#expl"/></svg>
          </div>
          <div class="vtools clip second">
            <svg class="i"><use href="#ord"/></svg><svg class="i"><use href="#ord2"/></svg><svg class="i"><use href="#ord3"/></svg><svg class="i"><use href="#ord4"/></svg><svg class="i"><use href="#abc"/></svg><svg class="i"><use href="#sheet2"/></svg>
          </div>
        </div>
      </div>

      <div class="cmd-wrap">
        <div class="cmd-grip"><span class="x">×</span></div>
        <div class="cmd">指定偏移距离或 [通过(T)/删除(E)/图层(L)] &lt;2000&gt;: 2000</div>
      </div>
    </div>
  </div>

  <div class="wm-logo">
    <span class="cn first">秒</span><span class="lat">d</span><span class="o"><svg viewBox="0 0 26 26"><circle cx="13" cy="13" r="11" fill="#2f7fe0" stroke="#fff" stroke-width="3"/><path d="M10 7.500l8 5.500-8 5.500z" fill="#fff"/></svg><svg class="heart" viewBox="0 0 12 10"><path d="M6 9.500L1 4a2.500 2.500 0 0 1 5-1.500A2.500 2.500 0 0 1 11 4z" fill="#e8cf3a" stroke="#111"/></svg></span><span class="lat">ng</span><span class="cn last">视频</span>
  </div>

  <div class="wm-zixue">
    <svg class="play" viewBox="0 0 48 50"><path d="M13 3h3c3 0 5 1 7 2l19 14c5 4 5 9 0 13L23 45c-3 2-6 3-9 2-6-1-10-4-10-10V12c0-5 3-9 9-9zM13 3c-3 3-3 5-3 9v27c0 4 4 6 8 3" fill="none" stroke="#cfd2d9" stroke-width="3.500" stroke-linejoin="round"/><path d="M19 19l10 6-10 6z" fill="#cfd2d9"/><path d="M32 19v12" stroke="#cfd2d9" stroke-width="2.500"/></svg>
    <div class="wm-text">
      <div class="wm-cn">溜溜自学</div>
      <div class="wm-en">ZiXUe.3D66.COM</div>
    </div>
  </div>
</div>
</body>
</html>
```

FILE: styles.css
```css
* { box-sizing: border-box; }
html, body { margin: 0; padding: 0; height: 100%; overflow: hidden; background: #7b7b7b; }
body { font-family: "Liberation Sans", "Noto Sans CJK SC", sans-serif; }
.sprite { position: absolute; width: 0; height: 0; }
.app { position: relative; width: 1268px; height: 682px; display: flex; flex-direction: column; overflow: hidden; filter: blur(.4px); background: #7b7b7b; }
.i { width: 14px; height: 14px; flex: none; overflow: hidden; }
.dot { width: 2px; height: 2px; background: #444; margin: 0 4px; flex: none; }
.g-help { font: bold 10px "Liberation Sans", sans-serif; text-anchor: middle; fill: #222; }
.g-a { font: bold 12px "Liberation Serif", serif; fill: #222; }
.g-mtx { font: 13px "Liberation Sans", sans-serif; text-anchor: middle; fill: #222; }
.g-q { font: bold 11px "Liberation Sans", sans-serif; text-anchor: middle; fill: #2f5f9e; }

/* title bar */
.titlebar { height: 18px; display: flex; background: #6a6a6a; flex: none; }
.logo-btn { position: absolute; left: 0; top: 0; width: 23px; height: 25px; background: linear-gradient(#8d8d8d, #b5b5b5); border: 1px solid #666; border-top: 0; overflow: hidden; z-index: 2; }
.logo-a { width: 18px; height: 21px; position: absolute; left: -2px; top: 0; }
.logo-caret { position: absolute; right: 1px; top: 9px; border: 2px solid transparent; border-top: 3px solid #222; }
.qat { margin-left: 25px; width: 329px; display: flex; align-items: center; gap: 6.500px; padding-left: 7px; background: linear-gradient(#b5b5b5, #8c8c8c); }
.qat .dot { margin: 0; }
.ws { margin-left: 2px; flex: 1; height: 17px; display: flex; align-items: center; gap: 1px; padding: 0 3px; font-size: 10.500px; color: #777; background: linear-gradient(#e9e9e9, #a8a8a8); }
.ws .caret-d { margin-left: auto; }
.caret-d { border: 3px solid transparent; border-top: 4px solid #222; margin-top: 4px; }
.caret-r { border: 3px solid transparent; border-left: 4px solid #222; margin-left: 4px; }
.qat-more { width: 12px; background: #6a6a6a; display: flex; justify-content: center; align-items: center; }
.doc-title { width: 376px; background: #fff; font-size: 12px; color: #333; padding-left: 157px; line-height: 12px; }
.srch-btn { width: 12px; background: #5f5f5f; display: flex; align-items: center; }
.search { width: 156px; background: #f2f2f2; color: #777; font-size: 10px; font-style: italic; line-height: 17px; padding-left: 3px; }
.info { width: 220px; display: flex; align-items: center; background: linear-gradient(#d4d4d4, #a8a8a8); padding-left: 3px; }
.info .i { margin-right: 4px; }
.info .binoc { margin-right: 8px; }
.login { font-size: 10px; color: #666; margin-left: 2px; }
.info .push { margin-left: 54px; margin-right: 10px; }
.info .xc { margin-right: 8px; }
.info .q { margin-left: 10px; }
.win { flex: 1; background: #fff; display: flex; align-items: center; gap: 30px; padding-left: 38px; }
.win-min { width: 10px; height: 1px; background: #c4c4c4; }
.win-max { width: 9px; height: 10px; border: 1px solid #c4c4c4; }
.win-x { color: #bbb; font-size: 17px; line-height: 14px; }

/* menu */
.menubar { height: 18px; flex: none; display: flex; align-items: center; gap: 18.700px; padding-left: 34px; font-size: 10.500px; color: #e0e0e0; background: linear-gradient(#8b8b8b, #636363); }
.menu-win { margin-left: auto; margin-right: 2px; font-size: 11px; color: #ddd; }
.menu-win b { font-weight: normal; font-size: 9px; margin: 0 1px; }

/* tabs */
.tabbar { height: 26px; flex: none; background: linear-gradient(#7a7a7a, #8a8a8a); display: flex; align-items: flex-end; padding-left: 9px; }
.doc-tab { width: 108px; height: 20px; background: linear-gradient(#e2e2e2, #c4c4c4); border-radius: 8px 4px 0 0; font-size: 10.500px; color: #333; padding: 3px 0 0 14px; }
.plus-tab { width: 24px; height: 16px; margin-left: 9px; margin-bottom: 2px; background: #6c6c6c; border-radius: 5px; text-align: center; font-size: 11px; color: #999; line-height: 15px; }

/* toolbars */
.tb-row { display: flex; flex: none; height: 18px; padding-top: 1px; }
.r2 { margin-bottom: 4px; }
.sec { display: flex; align-items: center; height: 16px; flex: none; }
.sec .i { margin: 0 .8px; }
.sep { width: 1px; height: 14px; background: #9a9a9a; margin: 0 1.500px; flex: none; }
.sep.wide { margin: 0 5px; }
.s-std { width: 447px; background: #ebebeb; padding-left: 1px; }
.spacer-a { width: 42px; flex: none; }
.s-style { width: 412px; margin-left: 6px; background: #c9c9c9; }
.btn-i { width: 19px; height: 16px; background: #ececec; display: flex; align-items: center; justify-content: center; flex: none; }
.cb { height: 16px; background: #c8c8c8; display: flex; align-items: center; position: relative; font-size: 10px; color: #555; padding-left: 3px; flex: none; }
.w83 { flex: 1; }
.chev { position: absolute; right: 6px; top: 4px; width: 5px; height: 5px; border-right: 1px solid #aaa; border-bottom: 1px solid #aaa; transform: rotate(45deg); }
.s-tz1 { margin-left: 8px; width: 388px; background: #ececec; }
.s-tz1 .i { margin: 0 .9px; }
.s-ws { width: 155px; background: #c8c8c8; }
.w122 { width: 123px; padding-left: 7px; font-size: 10.500px; }
.muted { color: #888; }
.pair { display: flex; height: 16px; width: 32px; align-items: center; background: #e0e0e0; }
.pair .i { margin: 0 .5px; }
.s-layer { width: 280px; margin-left: 5px; background: #e3e3e3; }
.btn-l { width: 20px; display: flex; justify-content: center; flex: none; }
.w208 { width: 206px; background: #cfcfcf; padding-left: 0; }
.i-b { width: 9px; height: 13px; flex: none; margin-right: 2.500px; }
.i-s { width: 11px; height: 13px; flex: none; margin-right: 2.500px; }
.lname { font-weight: normal; font-size: 11px; margin-left: 1px; color: #444; }
.s-layer .i { margin: 0 1.500px; }
.s-prop { width: 401px; margin-left: 4px; background: #cdcdcd; gap: 2px; }
.mono { font-family: "Liberation Mono", monospace; font-size: 9.500px; color: #666; }
.w106 { width: 106px; padding-left: 3px; }
.w112 { width: 112px; padding-left: 6px; }
.w84 { width: 84px; padding-left: 4px; }
.w85 { flex: 1; padding-left: 6px; margin-left: 8px; }
.ln { width: 40px; height: 1px; background: #555; margin-right: 4px; flex: none; }
.ln.sh { width: 22px; }
.s-tz2 { width: 337px; margin-left: 6px; background: #ececec; padding-left: 1px; }
.s-tz2 .i { margin: 0 .8px; }

/* body */
.body { flex: 1; display: flex; min-height: 0; }
.tz { width: 70px; background: #f2f2f2; flex: none; }
.tz-head { height: 20px; background: #a6a6a6; font-size: 10.500px; color: #222; padding: 3px 0 0 2px; }
.tz-sec { padding-top: 2.700px; }
.tz-sec.line { border-bottom: 1px solid #a4a4a4; padding-bottom: 1px; }
.tz-sec.nb { padding-bottom: 0; }
.tz-sec.tight { padding-top: 1.450px; }
.it { height: 12.550px; display: flex; align-items: center; font-size: 10.500px; color: #3a3a3a; }
.it span { width: 42px; margin-left: 12px; text-align: justify; text-align-last: justify; line-height: 12px; white-space: nowrap; }
.m { width: 9px; height: 9px; flex: none; margin-right: -9px; }
.arr { width: 0; height: 0; flex: none; margin-right: -8px; margin-left: 1px; border: 3px solid transparent; border-left: 4px solid #3f6b9a; text-decoration: none; }
.arr.dn { border: 3px solid transparent; border-top: 4px solid #3f6b9a; margin-top: 3px; margin-right: -7px; }

.work { flex: 1; display: flex; flex-direction: column; min-width: 0; background: #7b7b7b; }
.mid { display: flex; height: 558px; flex: none; }
.draw-col { width: 24px; flex: none; padding-left: 3px; }
.grip { width: 16px; height: 5px; background: #666; }
.grip.dark { height: 5px; background: #3f3f3f; }
.vtools { width: 16px; background: #e3e3e3; display: flex; flex-direction: column; align-items: center; }
.vtools .i { margin: .7px 0; }
.hsep { width: 12px; height: 1px; background: #aaa; margin: 2px 0; flex: none; }
.view-grid { width: 1158px; flex: none; display: grid; grid-template-columns: 1142px 16px; grid-template-rows: 545px 13px; }
.canvas { width: 1142px; height: 545px; display: block; }
.cp { font: 13px "Noto Sans CJK SC", sans-serif; fill: #a0a0a0; text-anchor: middle; }
.wcs { font: 8px "Liberation Sans", sans-serif; fill: #aaa; }
.vscroll { background: #f4f4f4; position: relative; }
.chev-up, .chev-dn { position: absolute; left: 5px; width: 6px; height: 6px; border-left: 1.500px solid #555; border-top: 1.500px solid #555; }
.chev-up { top: 7px; transform: rotate(45deg); }
.chev-dn { bottom: 6px; transform: rotate(225deg); }
.thumb-v { position: absolute; left: 1px; top: 443px; width: 13px; height: 14px; background: #cfcfcf; }
.tabs { display: flex; align-items: stretch; background: #f6f6f6; font-size: 10.500px; color: #333; padding-left: 1px; min-width: 0; overflow: hidden; }
.nav { width: 13px; flex: none; border-right: 1px solid #bbb; display: flex; align-items: center; justify-content: center; background: #ececec; }
.tl, .tr { border: 3px solid transparent; }
.tl { border-right: 4px solid #444; margin-right: 3px; }
.tr { border-left: 4px solid #444; margin-left: 3px; }
.tl.bar { border-left: 1px solid #444; margin-right: 1px; }
.tr.bar { border-right: 1px solid #444; margin-left: 1px; }
.tab { flex: none; width: 38px; text-align: center; line-height: 13px; clip-path: polygon(4px 0, 100% 0, calc(100% - 4px) 100%, 0 100%); background: #e8e8e8; margin-right: 2px; white-space: nowrap; overflow: hidden; }
.tab.on { background: #000; color: #eee; width: 36px; }
.tabs-fill { width: 596px; flex: none; }
.chev-l, .chev-r { width: 5px; height: 5px; border-right: 1.500px solid #555; border-top: 1.500px solid #555; align-self: center; flex: none; }
.chev-l { transform: rotate(225deg); }
.chev-r { transform: rotate(45deg); margin-left: 271px; }
.thumb-h { width: 16px; background: #d4d4d4; margin-left: 74px; flex: none; }
.corner { background: #f4f4f4; }
.mod-col { flex: 1; padding-left: 3px; padding-top: 6px; overflow: hidden; }
.clip { width: 16px; }
.second { margin-top: 6px; }

/* command */
.cmd-wrap { display: flex; flex: 1; min-height: 0; padding-top: 4px; }
.cmd-grip { width: 24px; background: #777; position: relative; overflow: hidden; }
.cmd-grip .x { position: absolute; left: 7px; top: 10px; font-size: 13px; line-height: 14px; color: #222; font-weight: bold; }
.cmd { flex: 1; background: #c9c9c9; font: 13.500px/18px "DejaVu Sans Mono", "Noto Sans CJK SC", monospace; letter-spacing: -.15px; color: #222; padding-left: 1px; white-space: pre; overflow: hidden; }

/* overlays */
.wm-logo { position: absolute; left: 42px; top: 42px; height: 40px; display: flex; align-items: center; color: #fff; font-weight: bold; -webkit-text-stroke: 5px #161616; paint-order: stroke fill; transform: skewX(-5deg); }
.wm-logo .cn { font: 900 33px/40px "Noto Sans CJK SC", sans-serif; letter-spacing: -1.500px; white-space: nowrap; }
.wm-logo .first { display: inline-block; width: 43px; transform: scaleX(1.25); transform-origin: left center; }
.wm-logo .last { margin-left: 3px; }
.wm-logo .lat { font: bold 32px/40px "Liberation Sans", sans-serif; }
.wm-logo .o { width: 20px; height: 20px; position: relative; margin: 2px 0 0 -5px; flex: none; }
.wm-logo .o > svg:first-child { width: 20px; height: 20px; display: block; }
.heart { position: absolute; left: 9px; top: -10px; width: 11px; height: 9px; }
.wm-zixue { position: absolute; left: 964px; top: 549px; width: 234px; height: 115px; background: #1f2f58; display: flex; }
.play { width: 48px; height: 50px; margin: 33px 0 0 12px; flex: none; }
.wm-text { margin: 30px 0 0 18px; color: #d5d8de; }
.wm-cn { font: bold 33px/34px "Noto Sans CJK SC", sans-serif; letter-spacing: 4px; white-space: nowrap; }
.wm-en { font: 13px/14px "Inter", sans-serif; letter-spacing: 2.100px; white-space: nowrap; margin-top: 4px; color: #c5c9d2; }
```
